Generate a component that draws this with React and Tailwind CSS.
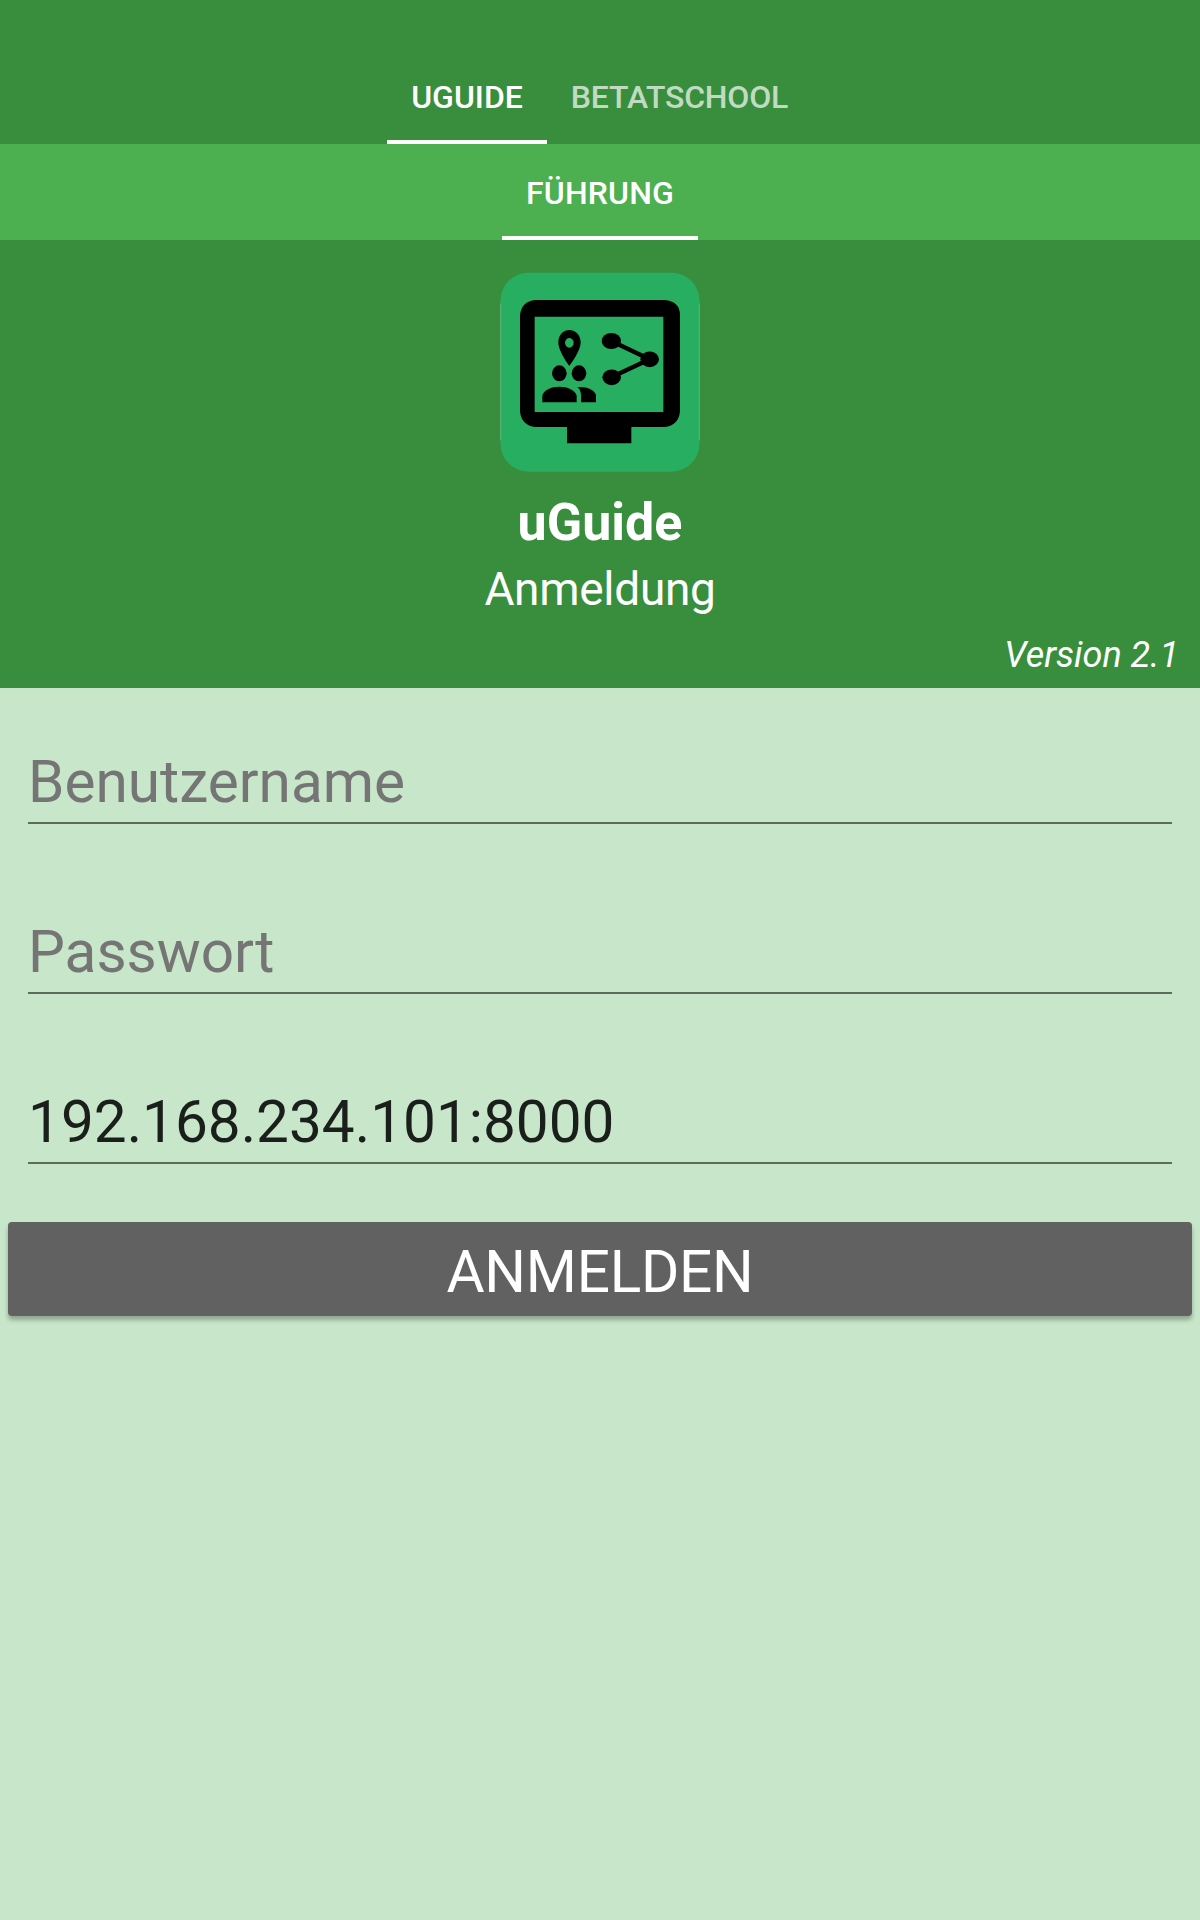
import { useState } from "react";

function Tab({ label, active = false, className = "" }) {
  return (
    <button
      type="button"
      role="tab"
      aria-selected={active}
      className={
        "flex h-24 items-center justify-center border-b-4 pt-[5px] text-[32px] leading-[38px] font-medium whitespace-nowrap " +
        (active ? "border-white text-white " : "border-transparent text-white/70 ") +
        className
      }
    >
      {label}
    </button>
  );
}

function Logo() {
  return (
    <svg viewBox="30 36 600 600" className="size-[200px]" aria-hidden="true">
      <rect x="31.5" y="38" width="597" height="597" rx="84" fill="#27ae60" />
      <path d="M32 130V540M628 130V540" stroke="#7fc094" strokeWidth="2" />
      <path
        fillRule="evenodd"
        d="M136 120H524Q570 124 570 166V454Q566 497 524 501H424V550H231V501H136Q94 497 90 454V166Q94 124 136 120ZM134 170V456H520V170Z"
      />
      <path
        fillRule="evenodd"
        d="M238 210C219 210 205 226 205 247C205 275 238 318 238 318S272 275 272 247C272 226 257 210 238 210ZM238 234A13 14.500 0 1 1 238 263A13 14.500 0 1 1 238 234Z"
      />
      <ellipse cx="208" cy="340" rx="22" ry="24" />
      <ellipse cx="267" cy="340" rx="22" ry="24" />
      <path d="M157 427V407C160 390 184 380 208 380S256 390 260 407V427Z" />
      <path d="M262 381C290 379 315 390 318 405V427H273V405C273 395 269 387 262 381Z" />
      <path d="M364 243L479 298L364 352" fill="none" stroke="#000" strokeWidth="13" />
      <ellipse cx="364" cy="243" rx="29" ry="24" />
      <ellipse cx="479" cy="298" rx="28" ry="23.500" />
      <ellipse cx="365" cy="352" rx="28" ry="23.500" />
    </svg>
  );
}

function Field({ type = "text", placeholder, value, onChange }) {
  return (
    <input
      type={type}
      placeholder={placeholder}
      aria-label={placeholder}
      value={value}
      onChange={(e) => onChange(e.target.value)}
      className="h-[90px] w-full rounded-none border-b-2 border-[#5c6b5c] bg-transparent pt-2 text-[58.5px] text-[#1a1f1b] outline-none placeholder:text-[#757575] placeholder:opacity-100"
    />
  );
}

export default function App() {
  const [user, setUser] = useState("");
  const [password, setPassword] = useState("");
  const [server, setServer] = useState("192.168.234.101:8000");

  return (
    <div className="flex min-h-screen flex-col bg-[#c8e6c9] font-['Roboto',sans-serif]">
      <nav className="flex justify-center bg-[#388e3c] pt-12" role="tablist">
        <Tab label="UGUIDE" active className="w-40" />
        <Tab label="BETATSCHOOL" className="w-[266px] pr-px tracking-[-0.2px]" />
      </nav>
      <nav className="flex justify-center bg-[#4caf50]" role="tablist">
        <Tab label="FÜHRUNG" active className="w-[196px] tracking-[0.15px]" />
      </nav>

      <header className="flex h-[448px] flex-col items-center bg-[#388e3c] pt-8 text-white">
        <Logo />
        <h1 className="mt-[21px] text-[52px] leading-[60px] font-bold">uGuide</h1>
        <h2 className="mt-[9px] text-[46px] leading-[54px] tracking-[-0.3px]">Anmeldung</h2>
        <p className="mt-[18px] self-end pr-[21px] text-[36px] leading-[42px] italic">Version 2.1</p>
      </header>

      <form onSubmit={(e) => e.preventDefault()}>
        <div className="flex flex-col gap-20 px-7 pt-[46px]">
          <Field placeholder="Benutzername" value={user} onChange={setUser} />
          <Field type="password" placeholder="Passwort" value={password} onChange={setPassword} />
          <Field value={server} onChange={setServer} />
        </div>
        <div className="px-2 pt-[58px]">
          <button
            type="submit"
            className="flex h-[94px] w-full items-center justify-center rounded-[4px] bg-[#616161] pt-[7px] text-[58.5px] leading-none tracking-[-0.25px] text-white shadow-[0_4px_4px_rgba(0,0,0,0.28)]"
          >
            ANMELDEN
          </button>
        </div>
      </form>
    </div>
  );
}
